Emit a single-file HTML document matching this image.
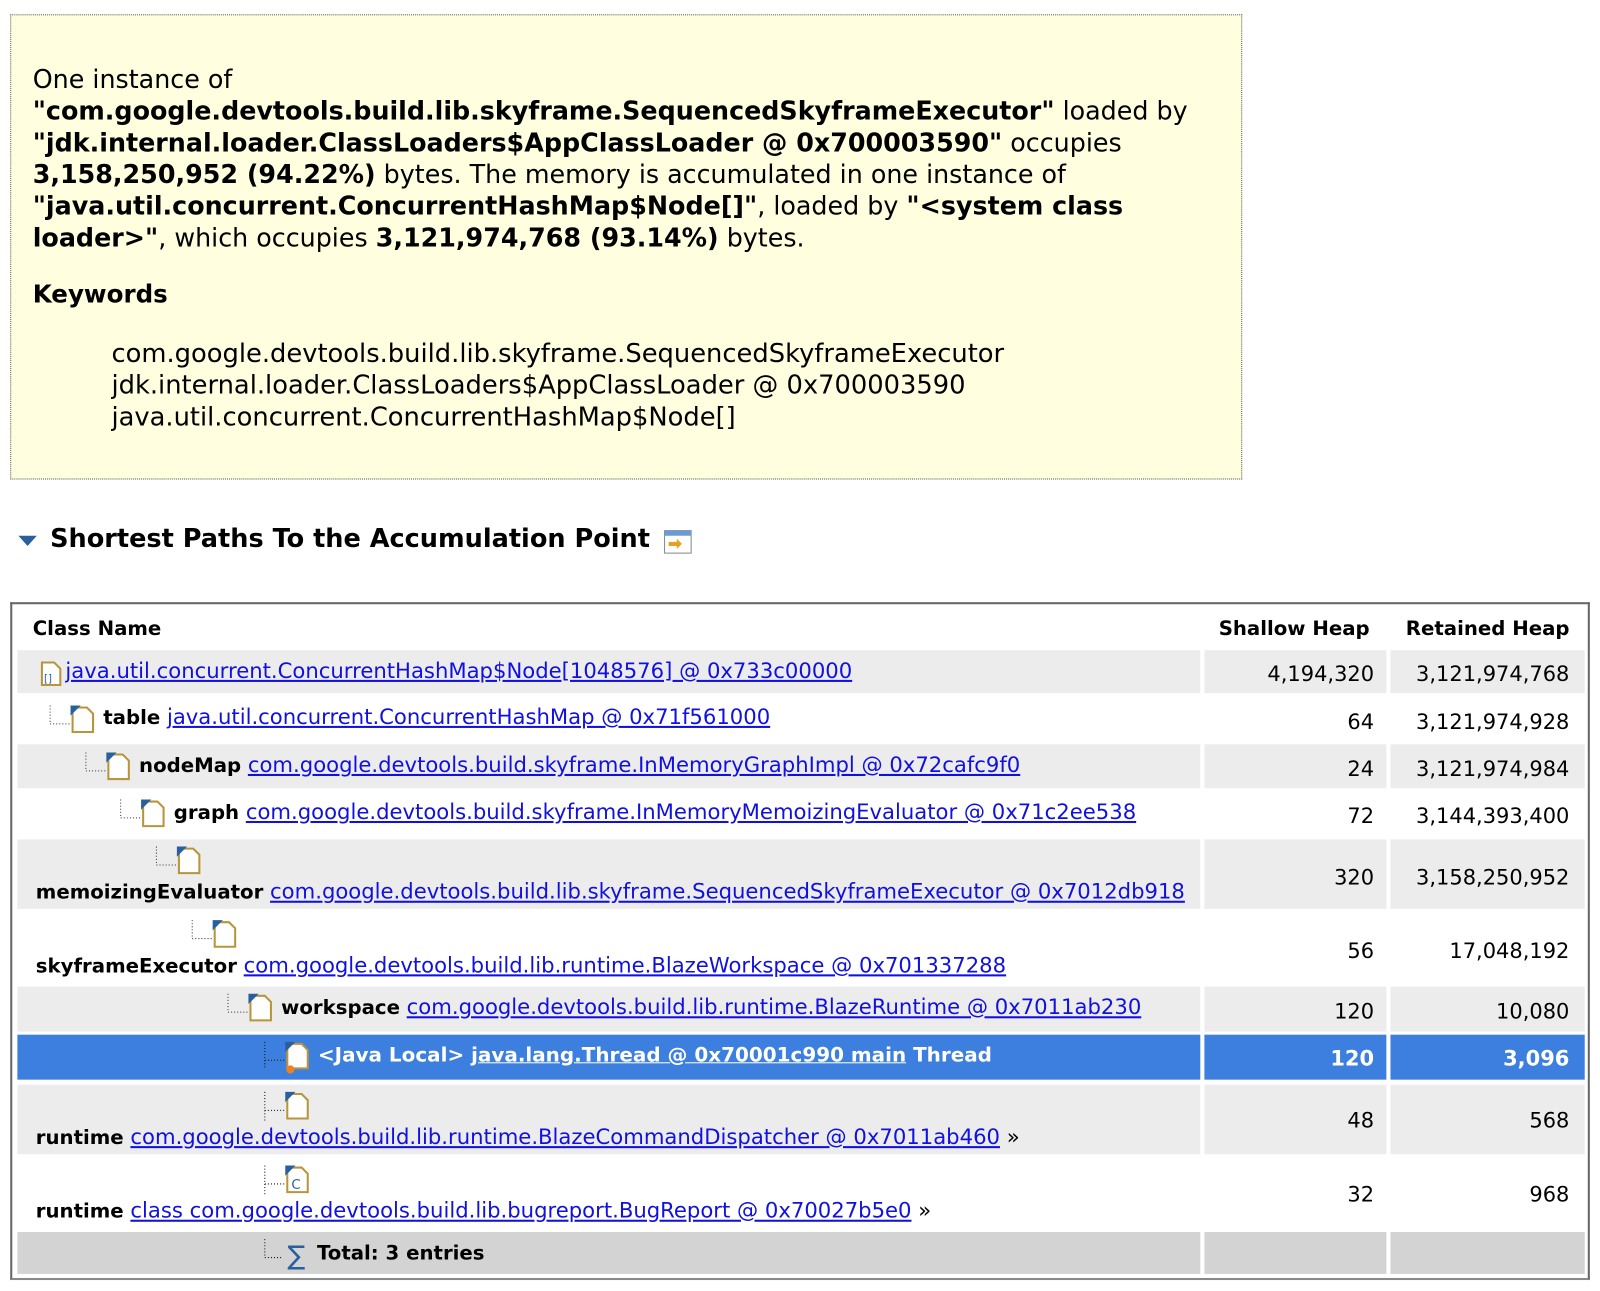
<!DOCTYPE html>
<html><head><meta charset="utf-8"><style>
html,body{margin:0;padding:0;background:#fff;width:1600px;height:1291px;overflow:hidden}
#w{position:absolute;left:0;top:0;width:1565px;height:1263px;transform:scale(1.0224);transform-origin:0 0;font-family:"DejaVu Sans","Liberation Sans",sans-serif;color:#000}
.box{position:absolute;left:10px;top:14px;width:1203px;height:453px;background:#ffffe0;border:1px dotted #555}
.p{position:absolute;left:21px;top:47px;font-size:24.8px;white-space:nowrap}
.p div{height:31px;line-height:31px}
.kw{position:absolute;left:21px;top:259px;font-size:24px;font-weight:bold}
.k{position:absolute;left:98px;top:315px;font-size:25.2px;line-height:31px}
.h{position:absolute;left:49px;top:512px;font-size:25px;font-weight:bold}
.tbl{position:absolute;left:10px;top:589px;width:1541px;height:659px;border:2px solid #666;border-bottom-color:#888}
.r{position:absolute;left:5px;width:1534px}
.c{position:absolute;top:0;bottom:0}
.c1{left:0;width:1157px}.c2{left:1161px;width:178px}.c3{left:1343px;width:190px}
.g .c{background:#ececec}.sel .c{background:#3d7fde}.tot .c{background:#d3d3d3}
.n{position:absolute;right:16px;font-size:20.5px}
.t{position:absolute;font-size:20.7px;white-space:nowrap}
.t b{font-size:19.3px}
.hd{position:absolute;font-size:19.3px;font-weight:bold;white-space:nowrap}
a{color:#1010e0;text-decoration:underline}
.sel .t,.sel .n{color:#fff;font-weight:bold}.sel .t{font-size:19.5px}.sel a{color:#fff}
b{font-weight:bold}
svg{position:absolute}
</style></head><body><div id="w">
<div class="box">
<div class="p"><div>One instance of</div><div><b>"com.google.devtools.build.lib.skyframe.SequencedSkyframeExecutor"</b> loaded by</div><div><b>"jdk.internal.loader.ClassLoaders$AppClassLoader @ 0x700003590"</b> occupies</div><div><b>3,158,250,952 (94.22%)</b> bytes. The memory is accumulated in one instance of</div><div><b>"java.util.concurrent.ConcurrentHashMap$Node[]"</b>, loaded by <b>"&lt;system class</b></div><div><b>loader&gt;"</b>, which occupies <b>3,121,974,768 (93.14%)</b> bytes.</div></div>
<div class="kw">Keywords</div>
<div class="k">com.google.devtools.build.lib.skyframe.SequencedSkyframeExecutor<br>jdk.internal.loader.ClassLoaders$AppClassLoader @ 0x700003590<br>java.util.concurrent.ConcurrentHashMap$Node[]</div>
</div>
<svg style="left:16px;top:522px" width="22" height="14"><path d="M2 2 L20 2 L11 12Z" fill="#2a5f9e"/></svg>
<div class="h">Shortest Paths To the Accumulation Point</div>
<svg style="left:649px;top:518px" width="28" height="24"><rect x="1" y="1" width="26" height="22" fill="#fff" stroke="#888"/><rect x="1" y="1" width="26" height="5" fill="#6a9bd4"/><path d="M5 12 L13 12 L13 9 L18 14 L13 19 L13 16 L5 16Z" fill="#e8a020"/></svg>

<div class="tbl">
<div class="hd" style="left:20px;top:12px">Class Name</div>
<div class="hd" style="left:1180px;top:12px">Shallow Heap</div>
<div class="hd" style="left:1363px;top:12px">Retained Heap</div>

<div class="r g" style="top:45px;height:42px"><div class="c c1"></div><div class="c c2"></div><div class="c c3"></div>
<svg style="left:22px;top:10px" width="22" height="26"><path d="M2 2 H14 L20 8 V24 H2Z" fill="#fff" stroke="#b8953a" stroke-width="2"/><text x="4" y="21" font-size="10" fill="#2a5f9e">[]</text></svg>
<div class="t" style="left:47px;top:8px"><a>java.util.concurrent.ConcurrentHashMap$Node[1048576] @ 0x733c00000</a></div>
<div class="n" style="top:11px;right:207px">4,194,320</div><div class="n" style="top:11px">3,121,974,768</div></div>

<div class="r" style="top:89px;height:46px"><div class="c c1"></div><div class="c c2"></div><div class="c c3"></div>
<svg style="left:30px;top:8px" width="52" height="30"><path d="M2 2 V20 H22" stroke="#333" stroke-dasharray="1 2" fill="none"/><path d="M24 4 H38 L44 10 V28 H24Z" fill="#fff" stroke="#b8953a" stroke-width="2"/><path d="M22 2 H32 L22 12Z" fill="#2a5f9e"/></svg>
<div class="t" style="left:84px;top:9px"><b>table</b> <a>java.util.concurrent.ConcurrentHashMap @ 0x71f561000</a></div>
<div class="n" style="top:14px;right:207px">64</div><div class="n" style="top:14px">3,121,974,928</div></div>

<div class="r g" style="top:137px;height:43px"><div class="c c1"></div><div class="c c2"></div><div class="c c3"></div>
<svg style="left:65px;top:6px" width="52" height="30"><path d="M2 2 V20 H22" stroke="#333" stroke-dasharray="1 2" fill="none"/><path d="M24 4 H38 L44 10 V28 H24Z" fill="#fff" stroke="#b8953a" stroke-width="2"/><path d="M22 2 H32 L22 12Z" fill="#2a5f9e"/></svg>
<div class="t" style="left:119px;top:8px"><b>nodeMap</b> <a>com.google.devtools.build.skyframe.InMemoryGraphImpl @ 0x72cafc9f0</a></div>
<div class="n" style="top:12px;right:207px">24</div><div class="n" style="top:12px">3,121,974,984</div></div>

<div class="r" style="top:182px;height:46px"><div class="c c1"></div><div class="c c2"></div><div class="c c3"></div>
<svg style="left:99px;top:7px" width="52" height="30"><path d="M2 2 V20 H22" stroke="#333" stroke-dasharray="1 2" fill="none"/><path d="M24 4 H38 L44 10 V28 H24Z" fill="#fff" stroke="#b8953a" stroke-width="2"/><path d="M22 2 H32 L22 12Z" fill="#2a5f9e"/></svg>
<div class="t" style="left:153px;top:9px"><b>graph</b> <a>com.google.devtools.build.skyframe.InMemoryMemoizingEvaluator @ 0x71c2ee538</a></div>
<div class="n" style="top:13px;right:207px">72</div><div class="n" style="top:13px">3,144,393,400</div></div>

<div class="r g" style="top:230px;height:68px"><div class="c c1"></div><div class="c c2"></div><div class="c c3"></div>
<svg style="left:134px;top:5px" width="52" height="30"><path d="M2 2 V20 H22" stroke="#333" stroke-dasharray="1 2" fill="none"/><path d="M24 4 H38 L44 10 V28 H24Z" fill="#fff" stroke="#b8953a" stroke-width="2"/><path d="M22 2 H32 L22 12Z" fill="#2a5f9e"/></svg>
<div class="t" style="left:18px;top:39px"><b>memoizingEvaluator</b> <a>com.google.devtools.build.lib.skyframe.SequencedSkyframeExecutor @ 0x7012db918</a></div>
<div class="n" style="top:25px;right:207px">320</div><div class="n" style="top:25px">3,158,250,952</div></div>

<div class="r" style="top:302px;height:70px"><div class="c c1"></div><div class="c c2"></div><div class="c c3"></div>
<svg style="left:169px;top:5px" width="52" height="30"><path d="M2 2 V20 H22" stroke="#333" stroke-dasharray="1 2" fill="none"/><path d="M24 4 H38 L44 10 V28 H24Z" fill="#fff" stroke="#b8953a" stroke-width="2"/><path d="M22 2 H32 L22 12Z" fill="#2a5f9e"/></svg>
<div class="t" style="left:18px;top:39px"><b>skyframeExecutor</b> <a>com.google.devtools.build.lib.runtime.BlazeWorkspace @ 0x701337288</a></div>
<div class="n" style="top:25px;right:207px">56</div><div class="n" style="top:25px">17,048,192</div></div>

<div class="r g" style="top:374px;height:44px"><div class="c c1"></div><div class="c c2"></div><div class="c c3"></div>
<svg style="left:204px;top:5px" width="52" height="30"><path d="M2 2 V20 H22" stroke="#333" stroke-dasharray="1 2" fill="none"/><path d="M24 4 H38 L44 10 V28 H24Z" fill="#fff" stroke="#b8953a" stroke-width="2"/><path d="M22 2 H32 L22 12Z" fill="#2a5f9e"/></svg>
<div class="t" style="left:258px;top:8px"><b>workspace</b> <a>com.google.devtools.build.lib.runtime.BlazeRuntime @ 0x7011ab230</a></div>
<div class="n" style="top:12px;right:207px">120</div><div class="n" style="top:12px">10,080</div></div>

<div class="r sel" style="top:421px;height:44px"><div class="c c1"></div><div class="c c2"></div><div class="c c3"></div>
<svg style="left:240px;top:5px" width="52" height="34"><path d="M2 2 V28 M2 20 H22" stroke="#111" stroke-dasharray="1 2" fill="none"/><path d="M24 4 H38 L44 10 V28 H24Z" fill="#fff" stroke="#b8953a" stroke-width="2"/><path d="M22 2 H32 L22 12Z" fill="#2a5f9e"/><circle cx="27" cy="29" r="4" fill="#f08020"/></svg>
<div class="t" style="left:294px;top:8px">&lt;Java Local&gt; <a>java.lang.Thread @ 0x70001c990 main</a> Thread</div>
<div class="n" style="top:11px;right:207px">120</div><div class="n" style="top:11px">3,096</div></div>

<div class="r g" style="top:470px;height:68px"><div class="c c1"></div><div class="c c2"></div><div class="c c3"></div>
<svg style="left:240px;top:5px" width="52" height="34"><path d="M2 2 V30 M2 20 H22" stroke="#111" stroke-dasharray="1 2" fill="none"/><path d="M24 4 H38 L44 10 V28 H24Z" fill="#fff" stroke="#b8953a" stroke-width="2"/><path d="M22 2 H32 L22 12Z" fill="#2a5f9e"/></svg>
<div class="t" style="left:18px;top:39px"><b>runtime</b> <a>com.google.devtools.build.lib.runtime.BlazeCommandDispatcher @ 0x7011ab460</a> »</div>
<div class="n" style="top:23px;right:207px">48</div><div class="n" style="top:23px">568</div></div>

<div class="r" style="top:542px;height:70px"><div class="c c1"></div><div class="c c2"></div><div class="c c3"></div>
<svg style="left:240px;top:5px" width="52" height="34"><path d="M2 2 V30 M2 20 H22" stroke="#111" stroke-dasharray="1 2" fill="none"/><path d="M24 4 H38 L44 10 V28 H24Z" fill="#fff" stroke="#b8953a" stroke-width="2"/><path d="M22 2 H32 L22 12Z" fill="#2a5f9e"/><text x="28" y="25" font-size="13" fill="#2a5f9e">C</text></svg>
<div class="t" style="left:18px;top:39px"><b>runtime</b> <a>class com.google.devtools.build.lib.bugreport.BugReport @ 0x70027b5e0</a> »</div>
<div class="n" style="top:23px;right:207px">32</div><div class="n" style="top:23px">968</div></div>

<div class="r tot" style="top:614px;height:41px"><div class="c c1"></div><div class="c c2"></div><div class="c c3"></div>
<svg style="left:240px;top:5px" width="52" height="32"><path d="M2 2 V20 H18" stroke="#111" stroke-dasharray="1 2" fill="none"/><text x="24" y="27" font-size="26" fill="#2a5f9e">∑</text></svg>
<div class="t" style="left:293px;top:8px"><b>Total: 3 entries</b></div></div>
</div>
</div></body></html>
